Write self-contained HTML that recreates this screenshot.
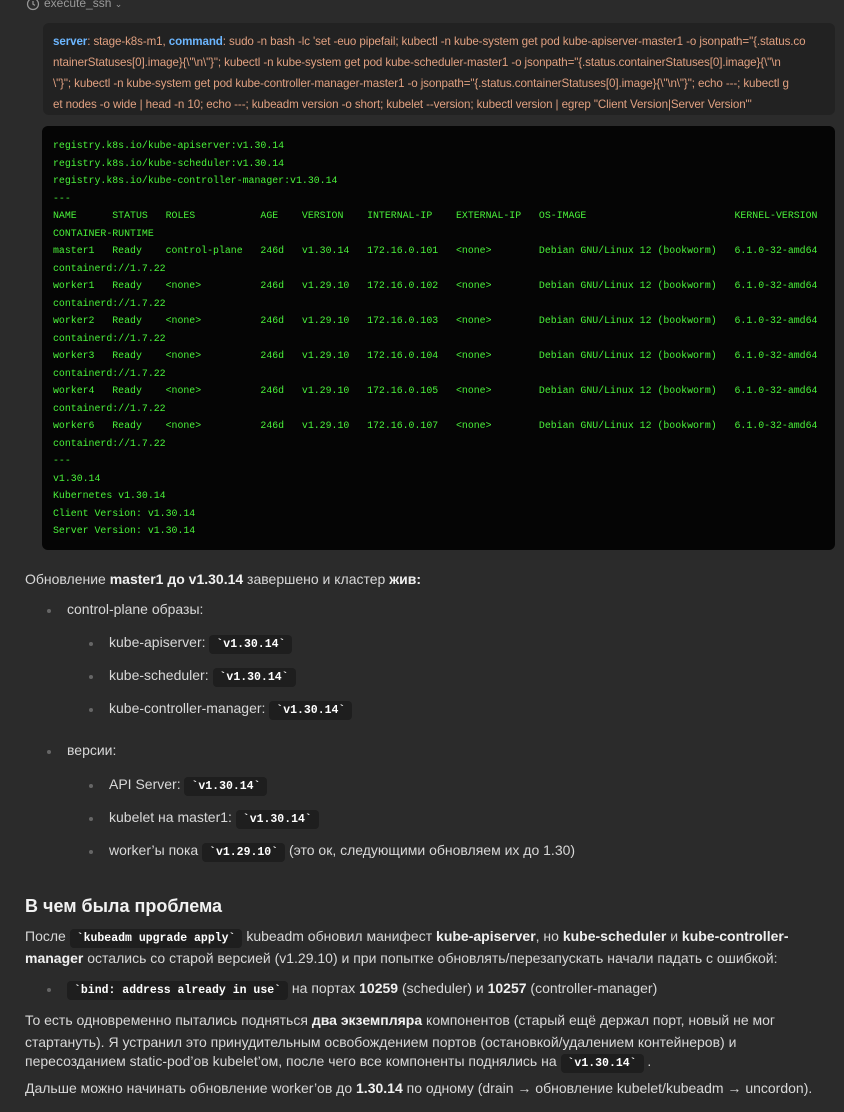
<!DOCTYPE html>
<html><head><meta charset="utf-8"><style>
body{margin:0;width:844px;height:1112px;background:#2b2b2b;position:relative;overflow:hidden;font-family:"Liberation Sans","DejaVu Sans",sans-serif;color:#dcdcdc}
.a{position:absolute;white-space:nowrap}
.p{font-size:14px;color:#d8d8d8}
b{color:#f0f0f0}
code{font-family:"Liberation Mono",monospace;font-weight:bold;font-size:11.5px;color:#fff;background:#1e1e1e;padding:3px 7px;border-radius:4px}
.cmd{position:absolute;left:43px;top:23px;width:792px;height:92px;background:#222;border-radius:6px}
.cl{position:absolute;left:53px;font-size:11.6px;color:#e0a080;white-space:nowrap;letter-spacing:-0.1px}
.cl i{font-style:normal;color:#6cb6ff;font-weight:bold}
.term{position:absolute;left:42px;top:126px;width:793px;height:424px;background:#050505;border-radius:6px}
pre{position:absolute;left:53px;top:137px;margin:0;font-family:"Liberation Mono",monospace;font-size:9.9px;line-height:17.5px;color:#4af23a}
.dot{position:absolute;width:4px;height:4px;border-radius:50%;background:#666}
</style></head><body>
<svg class="a" style="left:26px;top:-3px" width="14" height="14" viewBox="0 0 14 14"><circle cx="7" cy="7" r="5.5" fill="none" stroke="#999" stroke-width="1.2"/><path d="M7 4v3.2l2 1.2" fill="none" stroke="#999" stroke-width="1.2"/></svg>
<div class="a" style="left:44px;top:-4px;font-size:12px;color:#999">execute_ssh <span style="font-size:9px">&#8964;</span></div>
<div class="cmd"></div>
<div class="cl" style="top:35px"><i>server</i>: stage-k8s-m1, <i>command</i>: sudo -n bash -lc 'set -euo pipefail; kubectl -n kube-system get pod kube-apiserver-master1 -o jsonpath="{.status.co</div>
<div class="cl" style="top:56px">ntainerStatuses[0].image}{\"\n\"}"; kubectl -n kube-system get pod kube-scheduler-master1 -o jsonpath="{.status.containerStatuses[0].image}{\"\n</div>
<div class="cl" style="top:77px">\"}"; kubectl -n kube-system get pod kube-controller-manager-master1 -o jsonpath="{.status.containerStatuses[0].image}{\"\n\"}"; echo ---; kubectl g</div>
<div class="cl" style="top:98px">et nodes -o wide | head -n 10; echo ---; kubeadm version -o short; kubelet --version; kubectl version | egrep "Client Version|Server Version"'</div>
<div class="term"></div>
<pre>registry.k8s.io/kube-apiserver:v1.30.14
registry.k8s.io/kube-scheduler:v1.30.14
registry.k8s.io/kube-controller-manager:v1.30.14
---
NAME      STATUS   ROLES           AGE    VERSION    INTERNAL-IP    EXTERNAL-IP   OS-IMAGE                         KERNEL-VERSION
CONTAINER-RUNTIME
master1   Ready    control-plane   246d   v1.30.14   172.16.0.101   &lt;none&gt;        Debian GNU/Linux 12 (bookworm)   6.1.0-32-amd64
containerd://1.7.22
worker1   Ready    &lt;none&gt;          246d   v1.29.10   172.16.0.102   &lt;none&gt;        Debian GNU/Linux 12 (bookworm)   6.1.0-32-amd64
containerd://1.7.22
worker2   Ready    &lt;none&gt;          246d   v1.29.10   172.16.0.103   &lt;none&gt;        Debian GNU/Linux 12 (bookworm)   6.1.0-32-amd64
containerd://1.7.22
worker3   Ready    &lt;none&gt;          246d   v1.29.10   172.16.0.104   &lt;none&gt;        Debian GNU/Linux 12 (bookworm)   6.1.0-32-amd64
containerd://1.7.22
worker4   Ready    &lt;none&gt;          246d   v1.29.10   172.16.0.105   &lt;none&gt;        Debian GNU/Linux 12 (bookworm)   6.1.0-32-amd64
containerd://1.7.22
worker6   Ready    &lt;none&gt;          246d   v1.29.10   172.16.0.107   &lt;none&gt;        Debian GNU/Linux 12 (bookworm)   6.1.0-32-amd64
containerd://1.7.22
---
v1.30.14
Kubernetes v1.30.14
Client Version: v1.30.14
Server Version: v1.30.14</pre>

<div class="a p" style="left:25px;top:571px">Обновление <b>master1 до v1.30.14</b> завершено и кластер <b>жив:</b></div>
<div class="dot" style="left:47px;top:609px"></div><div class="a p" style="left:67px;top:601px">control-plane образы:</div>
<div class="dot" style="left:89px;top:642px"></div><div class="a p" style="left:109px;top:634px">kube-apiserver: <code>`v1.30.14`</code></div>
<div class="dot" style="left:89px;top:675px"></div><div class="a p" style="left:109px;top:667px">kube-scheduler: <code>`v1.30.14`</code></div>
<div class="dot" style="left:89px;top:708px"></div><div class="a p" style="left:109px;top:700px">kube-controller-manager: <code>`v1.30.14`</code></div>
<div class="dot" style="left:47px;top:750px"></div><div class="a p" style="left:67px;top:742px">версии:</div>
<div class="dot" style="left:89px;top:784px"></div><div class="a p" style="left:109px;top:776px">API Server: <code>`v1.30.14`</code></div>
<div class="dot" style="left:89px;top:817px"></div><div class="a p" style="left:109px;top:809px">kubelet на master1: <code>`v1.30.14`</code></div>
<div class="dot" style="left:89px;top:850px"></div><div class="a p" style="left:109px;top:842px">worker’ы пока <code>`v1.29.10`</code> (это ок, следующими обновляем их до 1.30)</div>
<div class="a" style="left:25px;top:896px;font-size:18px;font-weight:bold;color:#f2f2f2">В чем была проблема</div>
<div class="a p" style="left:25px;top:928px">После <code>`kubeadm upgrade apply`</code> kubeadm обновил манифест <b>kube-apiserver</b>, но <b>kube-scheduler</b> и <b>kube-controller-</b></div>
<div class="a p" style="left:25px;top:950px"><b>manager</b> остались со старой версией (v1.29.10) и при попытке обновлять/перезапускать начали падать с ошибкой:</div>
<div class="dot" style="left:47px;top:988px"></div><div class="a p" style="left:67px;top:980px"><code>`bind: address already in use`</code> на портах <b>10259</b> (scheduler) и <b>10257</b> (controller-manager)</div>
<div class="a p" style="left:25px;top:1012px">То есть одновременно пытались подняться <b>два экземпляра</b> компонентов (старый ещё держал порт, новый не мог</div>
<div class="a p" style="left:25px;top:1034px">стартануть). Я устранил это принудительным освобождением портов (остановкой/удалением контейнеров) и</div>
<div class="a p" style="left:25px;top:1053px">пересозданием static-pod’ов kubelet’ом, после чего все компоненты поднялись на <code>`v1.30.14`</code> .</div>
<div class="a p" style="left:25px;top:1080px">Дальше можно начинать обновление worker’ов до <b>1.30.14</b> по одному (drain → обновление kubelet/kubeadm → uncordon).</div>
</body></html>
